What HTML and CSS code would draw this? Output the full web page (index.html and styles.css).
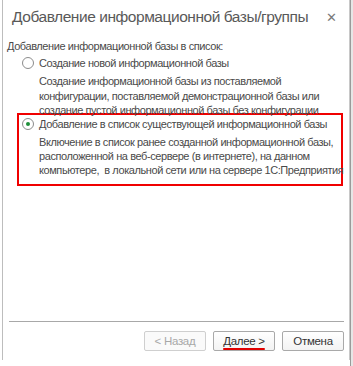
FILE: index.html
```html
<!DOCTYPE html>
<html lang="ru">
<head>
  <meta charset="UTF-8">
  <title>Добавление информационной базы/группы</title>
  <link rel="stylesheet" href="styles.css">
</head>
<body>
  <div class="screen">
    <div class="dialog">
      <div class="title-bar">
        <div class="title">Добавление информационной базы/группы</div>
        <div class="close">&#x2715;</div>
      </div>

      <div class="content">
        <div class="caption">Добавление информационной базы в список:</div>

        <div class="option">
          <div class="option-head">
            <span class="radio"></span>
            <span>Создание новой информационной базы</span>
          </div>
          <div class="option-desc">
            Создание информационной базы из поставляемой<br>
            конфигурации, поставляемой демонстрационной базы или<br>
            создание пустой информационной базы без конфигурации
          </div>
        </div>

        <div class="option highlight">
          <div class="option-head">
            <span class="radio checked"></span>
            <span>Добавление в список существующей информационной базы</span>
          </div>
          <div class="option-desc">
            Включение в список ранее созданной информационной базы,<br>
            расположенной на веб-сервере (в интернете), на данном<br>
            компьютере, &nbsp;в локальной сети или на сервере 1С:Предприятия
          </div>
        </div>
      </div>

      <div class="footer">
        <button class="btn" disabled>&lt; Назад</button>
        <button class="btn marked">Далее &gt;</button>
        <button class="btn">Отмена</button>
      </div>
    </div>
    <div class="side"></div>
  </div>
</body>
</html>
```

FILE: styles.css
```css
body {
  margin: 0;
  background: #fff;
  font-family: "Liberation Sans", Arial, sans-serif;
  color: #4a4a4a;
}

.screen {
  display: flex;
  height: 366px;
}

.dialog {
  margin-left: 2px;
  width: 346px;
  height: 360px;
  border-left: 1px solid #bdbdbd;
  border-right: 1px solid #c8c8c8;
  display: flex;
  flex-direction: column;
}

.side {
  flex: 1;
  background: #e6e6e6;
  border-left: 1px solid #9a9a9a;
}

.title-bar {
  display: flex;
  align-items: center;
  justify-content: space-between;
  padding: 7px 12px 0 9px;
  height: 20px;
}

.title {
  font-size: 15.5px;
  letter-spacing: -0.45px;
  color: #595959;
  white-space: nowrap;
}

.close {
  font-size: 13px;
  color: #7a7a7a;
}

.content {
  padding: 12px 0 0 4px;
  flex: 1;
  font-size: 11px;
  letter-spacing: -0.42px;
  white-space: nowrap;
}

.caption {
  line-height: 14px;
}

.option {
  margin: 2px 0 0 10px;
  width: 326px;
  box-sizing: border-box;
  padding: 0 0 0 5px;
}

.option.highlight {
  margin-top: -5px;
  padding: 1px 0 7px 3px;
  border: 2px solid #f00000;
}

.option-head {
  display: flex;
  align-items: center;
  height: 16px;
}

.radio {
  width: 10px;
  height: 10px;
  border: 1px solid #8c8c8c;
  border-radius: 50%;
  background: #fff;
  margin-right: 5px;
  display: flex;
  align-items: center;
  justify-content: center;
}

.radio.checked::after {
  content: "";
  width: 4px;
  height: 4px;
  border-radius: 50%;
  background: #1e8f3a;
}

.option-desc {
  margin: 3px 0 0 17px;
  line-height: 14.5px;
}

.highlight .option-desc {
  line-height: 14px;
}

.footer {
  margin: 0 5px 0 6px;
  border-top: 1px solid #a8a8a8;
  padding: 9px 0 9px;
  display: flex;
  justify-content: flex-end;
  gap: 7px;
}

.btn {
  width: 62px;
  height: 20px;
  font-family: inherit;
  font-size: 11.5px;
  letter-spacing: -0.3px;
  color: #333;
  background: linear-gradient(#fff, #f3f3f3);
  border: 1px solid #a9a9a9;
  border-radius: 2px;
  padding: 0;
}

.btn:disabled {
  color: #a8a8a8;
  border-color: #cfcfcf;
  background: #fafafa;
}

.btn.marked {
  text-decoration: underline;
  text-decoration-color: #e00000;
  text-decoration-thickness: 2px;
  text-underline-offset: 3px;
}
```
